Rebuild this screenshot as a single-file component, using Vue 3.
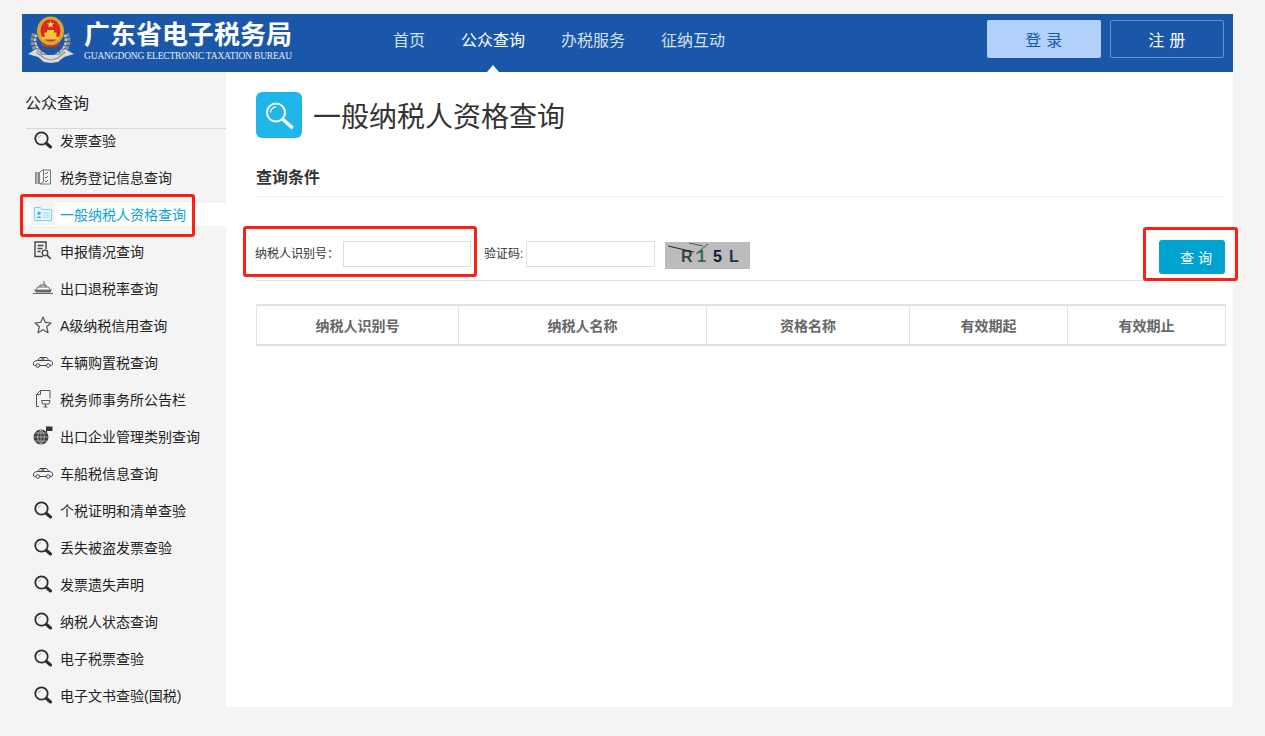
<template>
  <div class="page">
    <header class="top">
      <div class="logo">
        <svg class="emblem" width="48" height="48" viewBox="0 0 48 48">
          <path d="M8 18C4 28 9 37 19 41M39 18C43 28 38 37 28 41" fill="none" stroke="#8f918c" stroke-width="6" stroke-dasharray="3 1"/>
          <path d="M9 19C6 28 11 35 19 39M38 19C41 28 36 35 28 39" fill="none" stroke="#e4e6e2" stroke-width="1.500" stroke-dasharray="2 2"/>
          <path d="M1 38L9 33L15 39L32 39L38 33L47 38L37 41L31 46L24 47L17 46L11 41Z" fill="#d9dbdd"/>
          <path d="M9 36L17 42L24 44L31 42L38 36" fill="none" stroke="#8e9093" stroke-width="1.200"/>
          <ellipse cx="23.500" cy="15" rx="13.500" ry="14.500" fill="#d8a52e"/>
          <ellipse cx="23.500" cy="14.500" rx="10" ry="11" fill="#d9281f"/>
          <path d="M23.500 4.500l1 2.700 2.900.1-2.300 1.700.8 2.800-2.400-1.600-2.400 1.600.8-2.800-2.300-1.700 2.900-.1z" fill="#f6cf3c"/>
          <path d="M15 21h17v2.500H15zM17.500 16.500h12V21h-12zM20 14h7v2.500h-7z" fill="#f1c63a"/>
          <path d="M14 28q9.500 5 19 0" fill="none" stroke="#c8352a" stroke-width="2"/>
        </svg>
        <div class="logo-text">
          <div class="logo-cn">广东省电子税务局</div>
          <div class="logo-en">GUANGDONG ELECTRONIC TAXATION BUREAU</div>
        </div>
      </div>
      <nav class="nav">
        <a v-for="n in navs" :key="n" :class="['nav-item', { active: n === '公众查询' }]">{{ n }}</a>
      </nav>
      <div class="btns">
        <button class="btn login">登 录</button>
        <button class="btn reg">注 册</button>
      </div>
    </header>

    <div class="body">
      <aside class="side">
        <div class="side-title">公众查询</div>
        <ul class="menu">
          <li v-for="m in menus" :key="m.name" :class="['menu-item', { current: m.current }]">
            <span class="menu-icon">
              <svg v-if="m.icon === 'search'" width="18" height="18" viewBox="0 0 18 18" fill="none">
                <circle cx="7.500" cy="7.500" r="6.200" stroke="#2c2c2c" stroke-width="1.800"/>
                <path d="M4.500 7a3 3 0 0 1 2.500-2.600" stroke="#aaa" stroke-width="1"/>
                <path d="M12.500 12.500L16.500 16" stroke="#2c2c2c" stroke-width="3" stroke-linecap="round"/>
              </svg>
              <svg v-else-if="m.icon === 'book'" width="18" height="16" viewBox="0 0 18 16" fill="none">
                <path d="M1 3h5v12H1z" fill="#888"/>
                <path d="M3.200 3v12" stroke="#f4f4f4" stroke-width=".8"/>
                <path d="M6 3l3.500-2.500v12.500L6 15M9.500 1h7v14H6" stroke="#777" stroke-width="1"/>
                <path d="M11 4l1 1 2-2M11 8l1 1 2-2M11 12l1 1 2-2" stroke="#666" stroke-width="1"/>
              </svg>
              <svg v-else-if="m.icon === 'card'" width="18" height="14" viewBox="0 0 18 14" fill="none">
                <path d="M.5 13.500V.5h6l1.500 2h9.500v11z" fill="#e6f6fd" stroke="#7fd0f0"/>
                <circle cx="5" cy="6.300" r="1.700" fill="#3fb4e3"/>
                <path d="M2.500 11q2.500-3.500 5 0z" fill="#3fb4e3"/>
                <path d="M9.500 5.500h6v5.500h-6z" fill="#b5e3f6"/>
                <path d="M9.500 7.300h6M9.500 9.100h6" stroke="#e6f6fd" stroke-width=".6"/>
              </svg>
              <svg v-else-if="m.icon === 'report'" width="18" height="19" viewBox="0 0 18 19" fill="none">
                <path d="M9 15.500H1V1h11v7" stroke="#444" stroke-width="1.400"/>
                <path d="M3.500 4.500h6M3.500 7.500h5M3.500 10.500h3" stroke="#444" stroke-width="1.400"/>
                <circle cx="11" cy="12" r="2.800" stroke="#444" stroke-width="1.300"/>
                <path d="M13 14.200l3.800 3.600" stroke="#444" stroke-width="1.600"/>
              </svg>
              <svg v-else-if="m.icon === 'ship'" width="20" height="13" viewBox="0 0 20 13" fill="none">
                <path d="M0 12.500h20" stroke="#666"/>
                <path d="M1 8.500h18l-1.500 3H3z" fill="#666"/>
                <path d="M3.500 8.500l1-2.500h11l1.500 2.500" stroke="#666"/>
                <path d="M5 8h1.500M8 8h1.500M11 8h1.500M14 8h1.500" stroke="#f4f4f4"/>
                <path d="M7 6V4h6v2" stroke="#555"/>
                <path d="M10.500 0h1v4h-1z" fill="#555"/>
              </svg>
              <svg v-else-if="m.icon === 'star'" width="18" height="18" viewBox="0 0 18 18" fill="none">
                <path d="M9 1l2.300 5.400 5.700.6-4.300 3.800 1.300 5.900L9 13.700l-5 3 1.300-5.900L1 7l5.700-.6z" stroke="#555" stroke-width="1.200" stroke-linejoin="round"/>
              </svg>
              <svg v-else-if="m.icon === 'car'" width="20" height="12" viewBox="0 0 20 12" fill="none">
                <path d="M3 9.500H1.500Q.5 9.500.5 8V6.500Q1 4.800 4.500 4.500L7 1.500h6.500L16 4.500q3.500.3 3.500 2V8q0 1.500-1 1.500H17M6.500 9.500h7M4.500 4.500H16" stroke="#444" stroke-width="1"/>
                <path d="M10 1.500v3M7.500 3h4" stroke="#444" stroke-width=".8"/>
                <circle cx="4.800" cy="9.500" r="1.800" stroke="#444"/>
                <circle cx="15.200" cy="9.500" r="1.800" stroke="#444"/>
              </svg>
              <svg v-else-if="m.icon === 'doc'" width="15" height="18" viewBox="0 0 15 18" fill="none">
                <path d="M4.500.5h9.500v8M3 16.500H.5V4.500l4-4v4h-4" stroke="#555"/>
                <path d="M5.500 10.500h8.500l-1 3.500H6.500zM9.500 14v3M7.500 17h4" stroke="#555"/>
              </svg>
              <svg v-else width="20" height="19" viewBox="0 0 20 19" fill="none">
                <circle cx="8" cy="11" r="7.500" fill="#3d3d3d"/>
                <path d="M.5 11h15M8 3.500v15M1.800 7h12.400M1.800 15h12.400M8 3.500q-7 7.500 0 15M8 3.500q7 7.500 0 15" stroke="#c8c8c8" stroke-width=".7"/>
                <path d="M13.500 7V.5" stroke="#333"/>
                <path d="M14 .5h5.500v4.500H14z" fill="#333"/>
              </svg>
            </span>
            <span class="menu-name">{{ m.name }}</span>
          </li>
        </ul>
      </aside>

      <main class="main">
        <div class="head">
          <span class="head-icon">
            <svg width="30" height="30" viewBox="0 0 30 30" fill="none">
              <circle cx="12" cy="12.500" r="9" stroke="#fff" stroke-width="2"/>
              <path d="M6.500 12.500A5.500 5.500 0 0 1 12 7" stroke="#fff" stroke-width="1.300"/>
              <path d="M19 19.500l8.500 7.500" stroke="#fff" stroke-width="3.600" stroke-linecap="round"/>
            </svg>
          </span>
          <h1 class="head-title">一般纳税人资格查询</h1>
        </div>
        <div class="section">查询条件</div>

        <div class="form">
          <label class="lab lab-id">纳税人识别号：</label>
          <input class="ipt ipt-id" type="text" />
          <label class="lab lab-code">验证码:</label>
          <input class="ipt" type="text" />
          <div class="captcha">
            <span class="cc c1">R</span><span class="cc c2">1</span><span class="cc c3">5</span><span class="cc c4">L</span>
            <svg class="captcha-lines" width="85" height="27" viewBox="0 0 85 27" fill="none">
              <path d="M3 4L29 10" stroke="#222" stroke-width="1"/>
              <path d="M24 1L38 4M43 2L31 12" stroke="#333" stroke-width=".8"/>
            </svg>
          </div>
          <button class="query">查 询</button>
        </div>

        <table class="tbl">
          <thead>
            <tr>
              <th v-for="c in cols" :key="c.t" :style="{ width: c.w + 'px' }">{{ c.t }}</th>
            </tr>
          </thead>
        </table>

        <i class="mark m-id"></i>
        <i class="mark m-query"></i>
      </main>
      <i class="mark m-menu"></i>
    </div>
  </div>
</template>

<script setup>
const navs = ['首页', '公众查询', '办税服务', '征纳互动']

const menus = [
  { name: '发票查验', icon: 'search' },
  { name: '税务登记信息查询', icon: 'book' },
  { name: '一般纳税人资格查询', icon: 'card', current: true },
  { name: '申报情况查询', icon: 'report' },
  { name: '出口退税率查询', icon: 'ship' },
  { name: 'A级纳税信用查询', icon: 'star' },
  { name: '车辆购置税查询', icon: 'car' },
  { name: '税务师事务所公告栏', icon: 'doc' },
  { name: '出口企业管理类别查询', icon: 'globe' },
  { name: '车船税信息查询', icon: 'car' },
  { name: '个税证明和清单查验', icon: 'search' },
  { name: '丢失被盗发票查验', icon: 'search' },
  { name: '发票遗失声明', icon: 'search' },
  { name: '纳税人状态查询', icon: 'search' },
  { name: '电子税票查验', icon: 'search' },
  { name: '电子文书查验(国税)', icon: 'search' }
]

const cols = [
  { t: '纳税人识别号', w: 202 },
  { t: '纳税人名称', w: 248 },
  { t: '资格名称', w: 203 },
  { t: '有效期起', w: 158 },
  { t: '有效期止', w: 158 }
]
</script>

<style>
html, body {
  margin: 0;
  background: #f4f4f4;
}
</style>

<style scoped>
.page {
  width: 1211px;
  margin-left: 22px;
  padding: 14px 0 29px;
  font-family: "Liberation Sans", "Noto Sans CJK SC", sans-serif;
}

.top {
  display: flex;
  height: 58px;
  background: #1a57a8;
}

.logo {
  display: flex;
  width: 371px;
  padding-left: 5px;
  box-sizing: border-box;
}

.emblem {
  margin-top: 2px;
  flex-shrink: 0;
}

.logo-text {
  margin-left: 9px;
  color: #fff;
}

.logo-cn {
  margin-top: 6px;
  height: 30px;
  font-size: 26px;
  line-height: 30px;
  font-weight: 700;
  white-space: nowrap;
}

.logo-en {
  font-family: "Liberation Serif", serif;
  font-size: 9.500px;
  line-height: 12px;
  letter-spacing: -.17px;
  white-space: nowrap;
  color: #e6edf7;
}

.nav {
  display: flex;
  gap: 36px;
  flex: 1;
}

.nav-item {
  position: relative;
  font-size: 16px;
  line-height: 54px;
  color: #d3e0f2;
}

.nav-item.active {
  color: #fff;
}

.nav-item.active::after {
  content: "";
  position: absolute;
  left: 50%;
  bottom: 0;
  margin-left: -6px;
  border: 6px solid transparent;
  border-top: 0;
  border-bottom: 7px solid #fff;
}

.btns {
  display: flex;
  gap: 9px;
  margin: 6px 9px 0 0;
}

.btn {
  width: 114px;
  height: 38px;
  border-radius: 2px;
  font-family: inherit;
  font-size: 16px;
  letter-spacing: .3px;
  padding: 0;
}

.login {
  border: 0;
  background: #b2d2fd;
  color: #1a57a8;
}

.reg {
  border: 1px solid #6a93c9;
  background: #1a57a8;
  color: #fff;
}

.body {
  position: relative;
  display: flex;
  height: 635px;
}

.side {
  width: 204px;
  flex-shrink: 0;
  padding-left: 3px;
  box-sizing: border-box;
  background: #f4f4f4;
  overflow: hidden;
}

.side-title {
  height: 56px;
  box-sizing: border-box;
  line-height: 64px;
  font-size: 16px;
  color: #222;
}

.menu {
  list-style: none;
  margin: 0 0 0 1px;
  padding: 0;
  border-top: 1px solid #d8d8d8;
}

.menu-item {
  display: flex;
  align-items: center;
  height: 37px;
  font-size: 14px;
  color: #222;
}

.menu-item:first-child {
  margin-top: -8px;
}

.menu-item.current {
  position: relative;
  color: #0da4d3;
}

.menu-item.current::before {
  content: "";
  position: absolute;
  left: 0;
  right: 0;
  top: 8px;
  height: 23px;
  background: #fff;
}

.menu-icon {
  position: relative;
  display: flex;
  align-items: center;
  justify-content: center;
  width: 24px;
  height: 23px;
  margin: 0 5px;
}

.current .menu-icon {
  background: #f4f4f4;
}

.menu-name {
  position: relative;
  white-space: nowrap;
}

.main {
  position: relative;
  flex: 1;
  min-width: 0;
  background: #fff;
  padding: 20px 8px 0 30px;
  box-sizing: border-box;
}

.head {
  display: flex;
  align-items: center;
  height: 46px;
}

.head-icon {
  display: flex;
  align-items: center;
  justify-content: center;
  width: 46px;
  height: 46px;
  border-radius: 6px;
  background: #21b6e9;
}

.head-title {
  margin: 0 0 0 11px;
  font-size: 28px;
  font-weight: 400;
  color: #333;
}

.section {
  margin-top: 25px;
  padding-bottom: 8px;
  height: 25px;
  line-height: 30px;
  font-size: 16px;
  font-weight: 700;
  color: #333;
  border-bottom: 1px solid #eee;
}

.form {
  display: flex;
  align-items: flex-start;
  height: 84px;
  box-sizing: border-box;
  padding-top: 44px;
  border-bottom: 1px solid #e2e2e2;
}

.lab {
  font-size: 12px;
  line-height: 26px;
  color: #333;
  white-space: nowrap;
}

.lab-id {
  width: 88px;
  margin-left: -1px;
}

.lab-code {
  width: 42px;
  margin-left: 13px;
}

.ipt {
  width: 129px;
  height: 26px;
  box-sizing: border-box;
  border: 1px solid #ddd;
  background: #fff;
  padding: 0;
  outline: none;
}

.ipt-id {
  width: 128px;
}

.captcha {
  position: relative;
  display: flex;
  width: 85px;
  height: 27px;
  margin: 1px 0 0 10px;
  padding-left: 16px;
  box-sizing: border-box;
  background: #bcbcbc;
  font-size: 16px;
  font-weight: 700;
  line-height: 30px;
}

.captcha-lines {
  position: absolute;
  left: 0;
  top: 0;
}

.cc {
  width: 16px;
}

.c1 { color: #2f4a3f; }
.c2 { color: #2d6e4e; }
.c3 { color: #16163f; }
.c4 { color: #25304f; }

.query {
  width: 66px;
  height: 34px;
  margin: -1px 0 0 auto;
  padding: 0 0 0 8px;
  border: 0;
  border-radius: 3px;
  background: #00a3cf;
  color: #fff;
  font-family: inherit;
  font-size: 14px;
}

.tbl {
  width: 969px;
  margin-top: 23px;
  border-collapse: collapse;
  table-layout: fixed;
  border-top: 2px solid #e3e3e3;
  border-bottom: 2px solid #e0e0e0;
  border-left: 1px solid #e3e3e3;
  border-right: 1px solid #e3e3e3;
}

.tbl th {
  box-sizing: border-box;
  height: 40px;
  padding: 0;
  border-left: 1px solid #e3e3e3;
  font-size: 14px;
  font-weight: 700;
  color: #666;
}

.tbl th:first-child {
  border-left: 0;
}

.mark {
  position: absolute;
  box-sizing: border-box;
  border: 3px solid #fb2016;
  border-radius: 3px;
}

.m-menu {
  left: -2px;
  top: 122px;
  width: 175px;
  height: 43px;
}

.m-id {
  left: 17px;
  top: 154px;
  width: 234px;
  height: 51px;
}

.m-query {
  left: 917px;
  top: 155px;
  width: 95px;
  height: 54px;
}
</style>
